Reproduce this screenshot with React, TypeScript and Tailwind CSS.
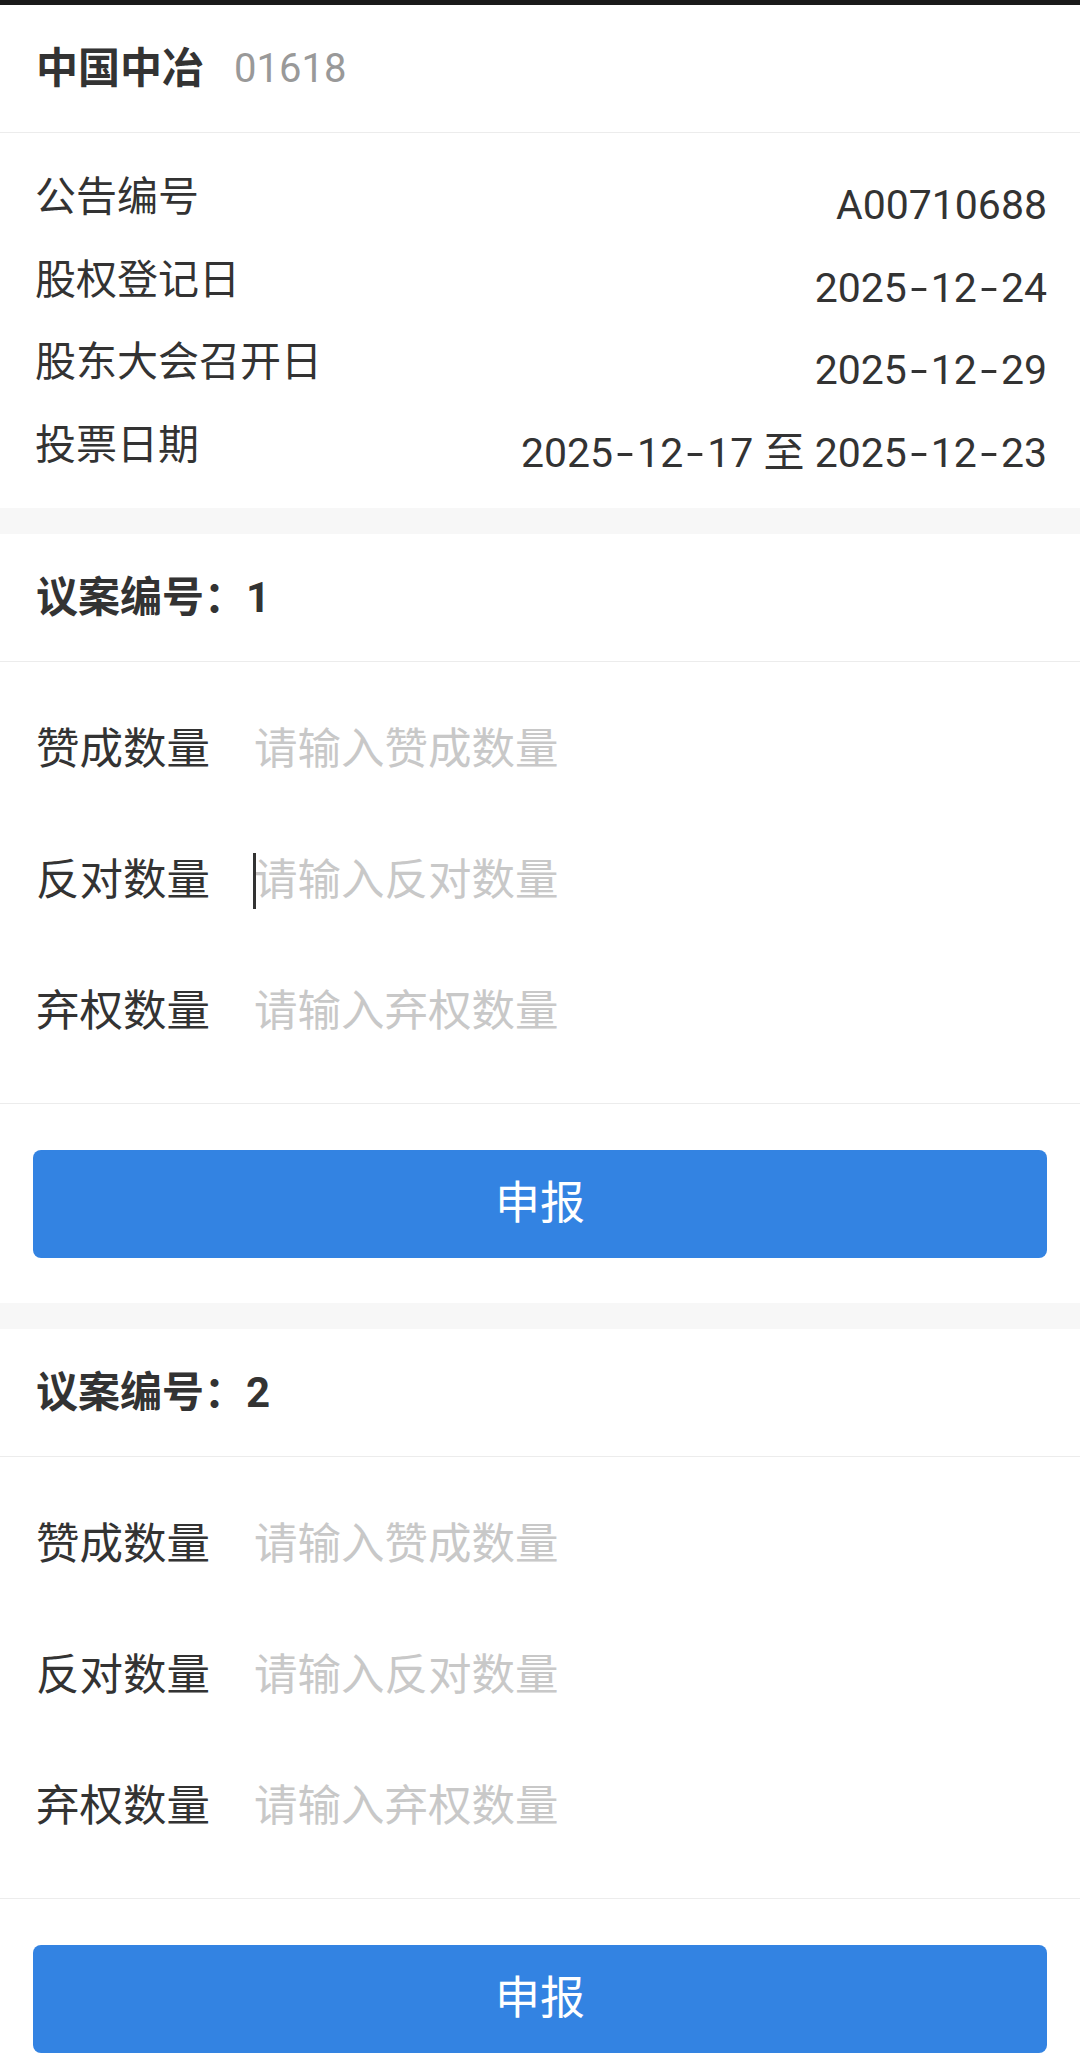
import React from 'react';

const info = [
  { label: '公告编号', value: 'A00710688' },
  { label: '股权登记日', value: '2025-12-24' },
  { label: '股东大会召开日', value: '2025-12-29' },
  { label: '投票日期', value: '2025-12-17 至 2025-12-23' },
];

const fields = [
  { label: '赞成数量', placeholder: '请输入赞成数量' },
  { label: '反对数量', placeholder: '请输入反对数量' },
  { label: '弃权数量', placeholder: '请输入弃权数量' },
];

// the dates use a wide dash, same width as a digit
const DateText: React.FC<{ text: string }> = ({ text }) => {
  const parts = text.split('-');
  return (
    <>
      {parts.map((p, i) => (
        <React.Fragment key={i}>
          {i > 0 && <span className="inline-block w-[24px] scale-x-150 text-center">-</span>}
          {p}
        </React.Fragment>
      ))}
    </>
  );
};

const Gap: React.FC = () => <div className="h-[26px] bg-[#f7f7f7]" />;

const Proposal: React.FC<{ no: number; caretAt?: number }> = ({ no, caretAt }) => {
  return (
    <section className="bg-white">
      <div className="flex h-[128px] items-center border-b border-[#ececec] px-[36px]">
        <h2 className="text-[42px] font-bold leading-none text-[#333]">议案编号：{no}</h2>
      </div>

      <div className="border-b border-[#ececec] pt-[22px] pb-[26px]">
        {fields.map((f, i) => (
          <div key={f.label} className="flex h-[131px] items-center px-[36px]">
            <label className="w-[218px] shrink-0 text-[43.5px] leading-none text-[#333]">{f.label}</label>
            <div className="relative flex-1">
              {caretAt === i && (
                <span className="absolute left-[-1px] top-1/2 h-[56px] w-[3px] -translate-y-1/2 bg-[#333]" />
              )}
              <input
                className="w-full bg-transparent text-[43.5px] leading-[60px] text-[#333] outline-none placeholder:text-[#c8c8c8]"
                placeholder={f.placeholder}
                inputMode="numeric"
              />
            </div>
          </div>
        ))}
      </div>

      <div className="px-[33px] pt-[46px] pb-[45px]">
        <button className="flex h-[108px] w-full items-center justify-center rounded-[8px] bg-[#3383e2] text-[45px] text-white">
          申报
        </button>
      </div>
    </section>
  );
};

const App: React.FC = () => {
  return (
    <div className="h-[2053px] w-[1080px] overflow-hidden bg-white font-[Roboto,'Noto_Sans_CJK_SC',sans-serif]">
      <div className="h-[5px] bg-[#1a1a1a]" />

      <header className="flex h-[128px] items-center border-b border-[#ececec] px-[36px]">
        <span className="text-[42px] font-bold leading-none text-[#333]">中国中冶</span>
        <span className="ml-[30px] text-[40px] leading-none text-[#999]">01618</span>
      </header>

      <div className="pl-[35px] pr-[33px] pt-[31px] pb-[14px]">
        {info.map((row) => (
          <div key={row.label} className="flex h-[82.5px] items-start justify-between">
            <span className="text-[41px] leading-[66px] text-[#333]">{row.label}</span>
            <span className="text-[41px] leading-[82px] text-[#333]">
              <DateText text={row.value} />
            </span>
          </div>
        ))}
      </div>

      <Gap />
      <Proposal no={1} caretAt={1} />
      <Gap />
      <Proposal no={2} />
    </div>
  );
};

export default App;
